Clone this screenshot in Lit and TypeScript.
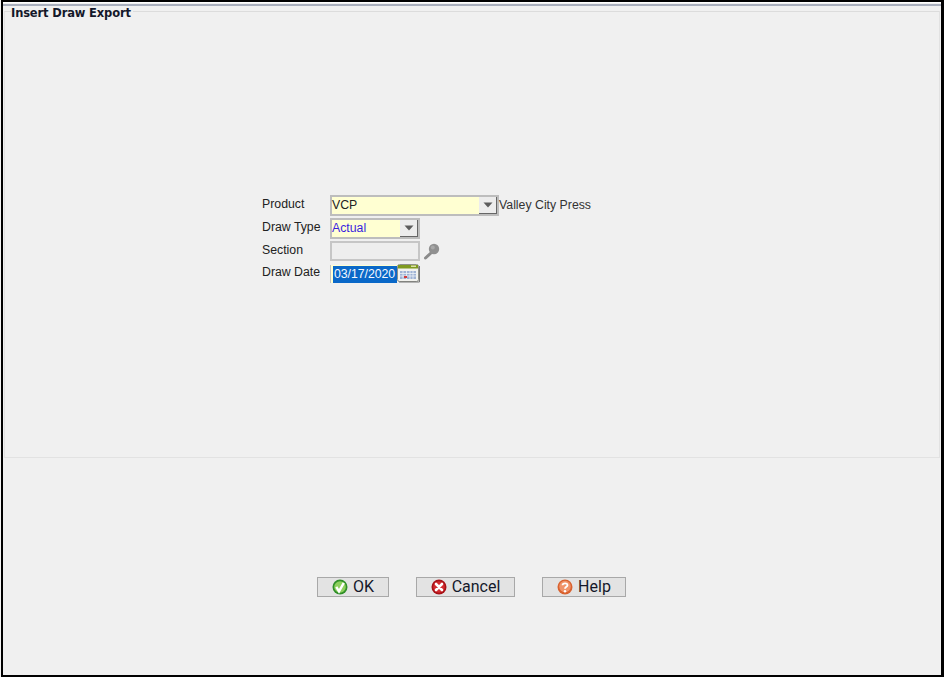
import { LitElement, html, css, svg } from "lit";
import { customElement } from "lit/decorators.js";

const arrow = svg`<svg width="10" height="6" viewBox="0 0 10 6"><path d="M0.5 0.5h9L5 5.5z" fill="#5c5c5c"/></svg>`;

@customElement("app-root")
export class AppRoot extends LitElement {
  static styles = css`
    :host { display: block; width: 944px; height: 677px; box-sizing: border-box; background: #f4f4f4; padding-left: 1px; font-family: "Liberation Sans", Arial, sans-serif; color: #222; overflow: hidden; }
    .frame { height: 100%; box-sizing: border-box; border: solid #000; border-width: 2px 3px 2px 2px; }
    .win { height: 100%; box-sizing: border-box; background: #f0f0f0; display: flex; flex-direction: column; border-top: 1px solid #fff; }
    .topline { height: 2px; background: #a9afbd; margin-top: 1px; flex: none; }
    .panel { position: relative; flex: none; height: 447px; margin: 5px 1px 0 1px; box-sizing: border-box; border: 1px solid #e2e2e2; border-top: 1px solid #dcdcdc; padding: 0 0 0 257px; }
    .legend { position: absolute; left: 6px; top: -5px; padding: 0 2px 0 0; background: #f0f0f0; font: bold 11.5px/13px "DejaVu Sans", sans-serif; letter-spacing: -0.15px; color: #14182a; }
    .form { margin-top: 183px; display: grid; grid-template-columns: 68px auto; row-gap: 2px; width: 340px; font-size: 12.3px; }
    .lbl { line-height: 16px; margin-top: 1px; align-self: start; color: #222; }
    .row { display: flex; align-items: center; }
    .combo { display: flex; box-sizing: border-box; height: 21px; border: 2px solid #bdbdbd; background: #ffffd2; align-items: center; }
    .combo.wide { width: 169px; }
    .combo.narrow { width: 90px; }
    .combo span { flex: 1; line-height: 17px; height: 17px; }
    .combo .blue { color: #3a1fe0; }
    .btn { width: 18px; height: 100%; display: flex; align-items: center; justify-content: center; background: #ececec; border-right: 1px solid #666; border-bottom: 1px solid #666; box-sizing: border-box; }
    .ext { color: #333; line-height: 18px; margin-top: 1px; align-self: flex-start; }
    .section { width: 90px; height: 20px; box-sizing: border-box; border: 2px solid #c6c6c6; background: #eeeeee; }
    .key { margin-left: 3px; }
    .row.date { margin-top: 1px; }
    .dbox { box-sizing: border-box; height: 18px; width: 67px; border-left: 1px solid #c2c2c2; background: #ffffd2; padding: 1px 0 0 2px; }
    .sel { display: block; height: 100%; background: #0a68c8; color: #f4f8ff; line-height: 16px; letter-spacing: -0.05px; padding-left: 1px; overflow: hidden; white-space: nowrap; }
    .bar { flex: none; padding: 119px 0 0 314px; display: flex; gap: 27px; }
    .b { height: 20px; box-sizing: border-box; border: 1px solid #a8a8a8; background: #e3e3e3; display: flex; align-items: center; justify-content: center; gap: 5px; font: 16px/18px Roboto, sans-serif; color: #14182a; }
    .ok { width: 72px; } .cancel { width: 99px; } .help { width: 84px; }
  `;
  render() {
    return html`<div class="frame"><div class="win">
      <div class="topline"></div>
      <div class="panel">
        <div class="legend">Insert Draw Export</div>
        <div class="form">
          <div class="lbl">Product</div>
          <div class="row">
            <div class="combo wide"><span>VCP</span><div class="btn">${arrow}</div></div>
            <div class="ext">Valley City Press</div>
          </div>
          <div class="lbl">Draw Type</div>
          <div class="row"><div class="combo narrow"><span class="blue">Actual</span><div class="btn">${arrow}</div></div></div>
          <div class="lbl">Section</div>
          <div class="row">
            <div class="section"></div>
            <svg class="key" width="17" height="17" viewBox="0 0 17 17">
              <path d="M8.500 9.500L2.500 15" stroke="#8b8b8b" stroke-width="3" stroke-linecap="round"/>
              <circle cx="11" cy="6" r="5.200" fill="#909090"/>
              <circle cx="9.800" cy="4.600" r="2" fill="#a8a8a8"/>
            </svg>
          </div>
          <div class="lbl">Draw Date</div>
          <div class="row date">
            <div class="dbox"><span class="sel">03/17/2020</span></div>
            <svg width="23" height="19" viewBox="0 0 23 19">
              <rect x="0.500" y="0.500" width="21" height="17" rx="2" fill="#f2f2ee" stroke="#8d9088"/>
              <rect x="1" y="1" width="20" height="3.500" fill="#7f9a20"/>
              <rect x="14" y="1.600" width="5" height="1.200" fill="#f0f0c8"/>
              <rect x="3" y="7" width="16" height="8" fill="#9fb3d4"/>
              <path d="M3 9.500h16M3 12h16M6 7v8M9.500 7v8M13 7v8M16 7v8" stroke="#eef2f8" stroke-width="0.800"/>
              <rect x="7" y="12" width="3" height="2" fill="#d23a3a"/>
              <path d="M22.500 2v16H2" stroke="#777" fill="none"/>
            </svg>
          </div>
        </div>
      </div>
      <div class="bar">
        <div class="b ok">
          <svg width="16" height="16" viewBox="0 0 16 16"><circle cx="8" cy="8" r="7.500" fill="#2f8f28"/><circle cx="8" cy="8" r="5.800" fill="#8ed05e"/><path d="M4.300 7.800L7 12.300L11.800 3.800" fill="none" stroke="#fff" stroke-width="2.400"/></svg>
          OK
        </div>
        <div class="b cancel">
          <svg width="16" height="16" viewBox="0 0 16 16"><circle cx="8" cy="8" r="7.500" fill="#a81016"/><circle cx="8" cy="8" r="5.800" fill="#d22c30"/><path d="M5 5l6 6M11 5l-6 6" stroke="#fff" stroke-width="2.600" stroke-linecap="round"/></svg>
          Cancel
        </div>
        <div class="b help">
          <svg width="16" height="16" viewBox="0 0 16 16"><circle cx="8" cy="8" r="7.500" fill="#d9622f"/><circle cx="8" cy="7.500" r="5.800" fill="#f0946a"/><path d="M5.500 6.200C5.700 3.700 10.500 3.600 10.500 6.200C10.500 7.800 8 7.800 8 9.800" fill="none" stroke="#fff" stroke-width="1.800"/><circle cx="8" cy="12.200" r="1.200" fill="#fff"/></svg>
          Help
        </div>
      </div>
    </div></div>`;
  }
}
